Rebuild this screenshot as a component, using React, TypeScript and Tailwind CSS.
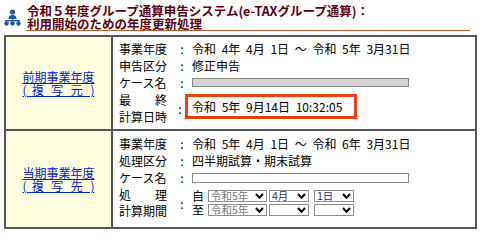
const jp = "font-['MS_Gothic','Noto_Sans_CJK_JP',sans-serif]";

function OrgIcon() {
  return (
    <svg width="17" height="17" viewBox="0 0 17 17" className="mt-[9px] shrink-0">
      <circle cx="8.5" cy="3" r="2.6" fill="#1e5aa8" />
      <path d="M4.5 10 Q4.5 6 8.5 6 Q12.5 6 12.5 10 Z" fill="#1e5aa8" />
      <rect x="1" y="11" width="15" height="1.4" fill="#1e5aa8" />
      <rect x="7.8" y="10" width="1.4" height="2" fill="#1e5aa8" />
      <circle cx="2.5" cy="14.5" r="2.2" fill="#1e5aa8" />
      <circle cx="8.5" cy="14.5" r="2.2" fill="#1e5aa8" />
      <circle cx="14.5" cy="14.5" r="2.2" fill="#1e5aa8" />
    </svg>
  );
}

function Chevron() {
  return (
    <svg width="9" height="6" viewBox="0 0 9 6" className="shrink-0">
      <path d="M1 1 L4.5 4.8 L8 1" fill="none" stroke="#000" strokeWidth="2" />
    </svg>
  );
}

function FakeSelect({ w, text, color }: { w: string; text?: string; color?: string }) {
  return (
    <div
      className={`${w} h-[12px] border border-[#8f8f8f] bg-white flex items-center justify-between pl-[2px] pr-[2px] text-[10.5px] leading-none ${color ?? ""}`}
    >
      <span>{text ?? ""}</span>
      <Chevron />
    </div>
  );
}

function Line({ label, children }: { label: string; children: React.ReactNode }) {
  return (
    <div className="flex h-[17px] items-center">
      <span className="w-[56px]">{label}</span>
      <span className="w-[14px] text-center">:</span>
      <div className="pl-[3px] flex items-center">{children}</div>
    </div>
  );
}

function LinkCell({ title, sub }: { title: string; sub: string }) {
  return (
    <div className="w-[107px] border-r-2 border-[#555] bg-[#ffffe0] flex items-center justify-center">
      <a href="#" className="block w-[72px] text-[#0022dd] underline leading-[13px]">
        <span className="block text-center">{title}</span>
        <span className="block [text-align-last:justify]">{sub}</span>
      </a>
    </div>
  );
}

export default function App() {
  return (
    <div className={`w-[480px] h-[233px] bg-white text-[12px] text-black ${jp}`}>
      {/* header */}
      <div className="flex pl-[4px]">
        <OrgIcon />
        <div className="ml-[5px] w-[444px] pt-[4px] border-b border-[#c0603c] pl-[1px] text-[12.5px] leading-[13px] font-bold text-[#5a0010]">
          <div>令和５年度グループ通算申告システム(e-TAXグループ通算)：</div>
          <div>利用開始のための年度更新処理</div>
        </div>
      </div>

      {/* table */}
      <div className="mt-[4px] ml-[4px] w-[473px] border-2 border-[#555]">
        {/* 前期 */}
        <div className="flex h-[94px] border-b-2 border-[#555]">
          <LinkCell title="前期事業年度" sub="( 複 写 元 )" />
          <div className="flex-1 pl-[6px] pt-[3px] leading-[17px]">
            <Line label="事業年度">
              <span className="whitespace-pre [word-spacing:3px]">令和 4年 4月 1日 ～ 令和 5年 3月31日</span>
            </Line>
            <Line label="申告区分">
              <span>修正申告</span>
            </Line>
            <Line label="ケース名">
              <div className="w-[217px] h-[9px] bg-[#d4d4d4] border border-[#8a8a8a]" />
            </Line>
            <div className="flex items-center">
              <div className="w-[56px]">
                <div className="flex justify-between w-[48px]">
                  <span>最</span>
                  <span>終</span>
                </div>
                <div>計算日時</div>
              </div>
              <span className="w-[10px] text-center">:</span>
              <div className="w-[172px] h-[25px] mb-[4px] border-[3px] border-[#f04010] pl-[4px] flex items-center whitespace-pre [word-spacing:3px]">
                令和 5年 9月14日 10:32:05
              </div>
            </div>
          </div>
        </div>

        {/* 当期 */}
        <div className="flex h-[96px]">
          <LinkCell title="当期事業年度" sub="( 複 写 先 )" />
          <div className="flex-1 pl-[6px] pt-[4px] leading-[17px]">
            <Line label="事業年度">
              <span className="whitespace-pre [word-spacing:3px]">令和 5年 4月 1日 ～ 令和 6年 3月31日</span>
            </Line>
            <Line label="処理区分">
              <span>四半期試算・期末試算</span>
            </Line>
            <Line label="ケース名">
              <div className="w-[217px] h-[10px] bg-white border border-[#8f8f8f]" />
            </Line>
            <div className="flex items-center mt-[1px]">
              <div className="w-[56px] leading-[16px]">
                <div className="flex justify-between w-[48px]">
                  <span>処</span>
                  <span>理</span>
                </div>
                <div>計算期間</div>
              </div>
              <span className="w-[14px] text-center">:</span>
              <div className="pl-[3px] flex flex-col gap-[2px]">
                <div className="flex items-center">
                  <span className="w-[16px] leading-[12px]">自</span>
                  <FakeSelect w="w-[59px]" text="令和5年" color="text-[#7a7a7a]" />
                  <div className="ml-[2px]">
                    <FakeSelect w="w-[40px]" text="4月" color="text-[#3a3a3a]" />
                  </div>
                  <div className="ml-[5px]">
                    <FakeSelect w="w-[40px]" text="1日" color="text-[#2a2a7a]" />
                  </div>
                </div>
                <div className="flex items-center">
                  <span className="w-[16px] leading-[12px]">至</span>
                  <FakeSelect w="w-[59px]" text="令和5年" color="text-[#7a7a7a]" />
                  <div className="ml-[2px]">
                    <FakeSelect w="w-[40px]" />
                  </div>
                  <div className="ml-[5px]">
                    <FakeSelect w="w-[40px]" />
                  </div>
                </div>
              </div>
            </div>
          </div>
        </div>
      </div>
    </div>
  );
}
